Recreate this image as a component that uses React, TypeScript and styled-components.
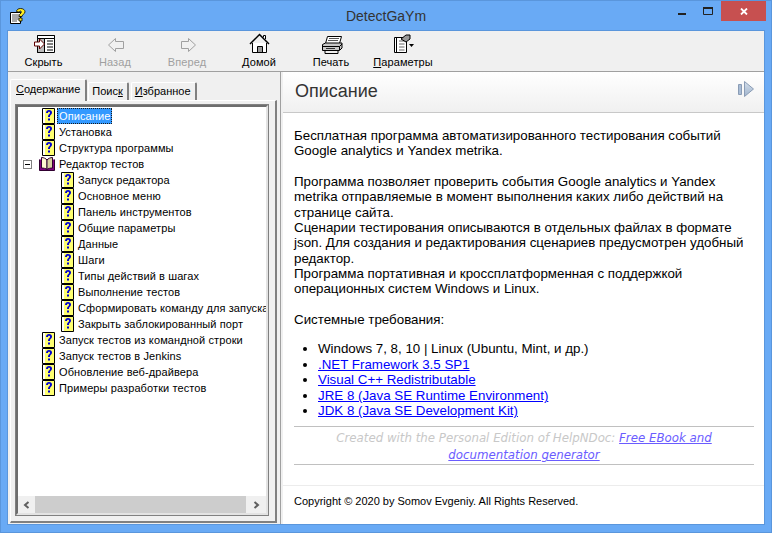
import styled, {createGlobalStyle} from "styled-components";

const GlobalStyle = createGlobalStyle`
  html, body {
    margin: 0;
    padding: 0;
    background: #69aaf5;
  }
`

const Window = styled.div`
  width: 772px;
  height: 533px;
  box-sizing: border-box;
  background: #69aaf5;
  border: 1px solid #5a96dc;
  display: flex;
  flex-direction: column;
  overflow: hidden;
  font-family: "Liberation Sans", Arial, sans-serif;
`

const TitleBar = styled.div`
  height: 29px;
  flex: none;
  display: flex;
  align-items: flex-start;
  padding: 0 5px 0 9px;
  position: relative;
`

const AppIcon = styled.svg`
  width: 16px;
  height: 16px;
  margin-top: 7px;
`

const TitleText = styled.div`
  position: absolute;
  left: 0;
  right: 0;
  top: 7px;
  text-align: center;
  font-size: 14px;
  line-height: 16px;
  color: #333;
`

const WindowButtons = styled.div`
  margin-left: auto;
  display: flex;
  align-items: flex-start;
  position: relative;
`

const WindowButton = styled.div<{ $close?: boolean }>`
  width: ${props => props.$close ? "45px" : "26px"};
  height: 20px;
  display: flex;
  align-items: center;
  justify-content: center;
  background: ${props => props.$close ? "#c75050" : "transparent"};
`

const Client = styled.div`
  flex: 1;
  min-height: 0;
  margin: 0 6px 7px 6px;
  background: #f0f0f0;
  display: flex;
  flex-direction: column;
  border: 1px solid #5a96dc;
`

const Toolbar = styled.div`
  height: 40px;
  flex: none;
  display: flex;
  align-items: flex-start;
  background: #f0f0f0;
  border-bottom: 1px solid #a0a0a0;
`

const ToolButton = styled.div<{ $width: number; $disabled?: boolean }>`
  width: ${props => props.$width}px;
  flex: none;
  display: flex;
  flex-direction: column;
  align-items: center;
  font-size: 11px;
  line-height: 13px;
  letter-spacing: 0.1px;
  color: ${props => props.$disabled ? "#a0a0a0" : "#000"};
`

const ToolIcon = styled.svg`
  width: 24px;
  height: 22px;
  margin-top: 2px;
  margin-bottom: 1px;
`

const Underlined = styled.span`
  text-decoration: underline;
`

const Panes = styled.div`
  flex: 1;
  min-height: 0;
  display: flex;
`

const LeftPane = styled.div`
  width: 273px;
  flex: none;
  box-sizing: border-box;
  padding: 7px 3px 1px 2px;
  display: flex;
  flex-direction: column;
  border-right: 1px solid #a0a0a0;
`

const Tabs = styled.div`
  height: 21px;
  flex: none;
  display: flex;
  align-items: flex-end;
  position: relative;
  z-index: 1;
`

const Tab = styled.div<{ $active?: boolean }>`
  box-sizing: border-box;
  height: ${props => props.$active ? "22px" : "18px"};
  padding: ${props => props.$active ? "2px 5px 0 5px" : "1px 4px 0 3px"};
  margin-bottom: ${props => props.$active ? "-1px" : "0"};
  margin-left: ${props => props.$active ? "0" : "1px"};
  margin-right: ${props => props.$active ? "0" : "1px"};
  font-size: 11px;
  line-height: 14px;
  white-space: nowrap;
  background: #f0f0f0;
  color: #000;
  border-top: 1px solid #fff;
  border-left: 1px solid #fff;
  border-right: 2px solid #808080;
  border-top-left-radius: 2px;
  border-top-right-radius: 2px;
`

const TabPage = styled.div`
  flex: 1;
  min-height: 0;
  box-sizing: border-box;
  border-top: 1px solid #fff;
  border-left: 1px solid #fff;
  border-right: 2px solid #808080;
  border-bottom: 2px solid #808080;
  padding: 4px 7px 6px 5px;
  display: flex;
`

const TreeBox = styled.div`
  flex: 1;
  min-width: 0;
  background: #fff;
  box-sizing: border-box;
  border: 2px solid #6d6d6d;
  border-right-color: #e3e3e3;
  border-bottom-color: #e3e3e3;
  outline: 1px solid #808080;
  outline-offset: 0;
  display: flex;
  flex-direction: column;
`

const TreeList = styled.div`
  flex: 1;
  min-height: 0;
  overflow: hidden;
  padding-top: 1px;
`

const TreeRow = styled.div<{ $level: number }>`
  height: 16px;
  display: flex;
  align-items: center;
  white-space: nowrap;
  padding-left: ${props => props.$level === 0 ? 5 : 42}px;
  font-size: 11px;
  letter-spacing: 0.1px;
  color: #000;
`

const Expander = styled.div`
  width: 9px;
  height: 9px;
  box-sizing: border-box;
  border: 1px solid #808080;
  margin-right: 9px;
  flex: none;
  display: flex;
  align-items: center;
  justify-content: center;
  &::after {
    content: "";
    width: 5px;
    height: 1px;
    background: #000;
  }
`

const ExpanderGap = styled.div`
  width: 18px;
  flex: none;
`

const NodeIcon = styled.svg`
  width: 14px;
  height: 16px;
  flex: none;
  overflow: visible;
`

const NodeLabel = styled.span<{ $selected?: boolean }>`
  margin-left: 2px;
  padding: 0 2px;
  height: 16px;
  line-height: 16px;
  box-sizing: border-box;
  color: ${props => props.$selected ? "#fff" : "#000"};
  background: ${props => props.$selected ? "#3399ff" : "transparent"};
  outline: ${props => props.$selected ? "1px dotted #1a1a1a" : "none"};
  outline-offset: -1px;
`

const ScrollBar = styled.div`
  height: 17px;
  flex: none;
  display: flex;
  align-items: stretch;
  background: #f0f0f0;
`

const ScrollArrow = styled.div<{ $width: number }>`
  width: ${props => props.$width}px;
  flex: none;
  display: flex;
  align-items: center;
  justify-content: center;
`

const ScrollThumb = styled.div`
  flex: 1;
  background: #cdcdcd;
`

const Splitter = styled.div`
  width: 2px;
  flex: none;
  background: #f0f0f0;
`

const RightPane = styled.div`
  flex: 1;
  min-width: 0;
  display: flex;
  flex-direction: column;
  background: #fff;
`

const TopicHeader = styled.div`
  height: 41px;
  flex: none;
  box-sizing: border-box;
  padding: 8px 10px 0 12px;
  display: flex;
  justify-content: space-between;
  background: linear-gradient(#ffffff, #f0f0f0);
  border-bottom: 1px solid #c8c8c8;
`

const TopicTitle = styled.h1`
  margin: 0;
  font-size: 18px;
  font-weight: normal;
  line-height: 22px;
  color: #333;
`

const NextIcon = styled.svg`
  width: 16px;
  height: 16px;
  margin-top: 1px;
`

const TopicBody = styled.div`
  flex: 1;
  min-height: 0;
  padding: 15px 10px 0 11px;
  font-size: 13.33px;
  line-height: 15.35px;
  color: #000;
`

const Paragraph = styled.p`
  margin: 0;
`

const Spacer = styled.div`
  height: 15.35px;
`

const Requirements = styled.ul`
  margin: 14px 0 0 0;
  padding: 0 0 0 24px;
  list-style: disc;
  line-height: 15.5px;
`

const HelpLink = styled.a`
  color: #0000ff;
  text-decoration: underline;
`

const Credit = styled.div`
  margin-top: 7px;
  border-top: 1px solid #c0c0c0;
  border-bottom: 1px solid #c0c0c0;
  text-align: center;
  font-style: italic;
  font-family: "DejaVu Sans", Verdana, sans-serif;
  font-size: 11.8px;
  line-height: 17px;
  padding: 3px 0 0 0;
  color: #c8c8c8;
`

const CreditLink = styled.a`
  color: #6a5cff;
  text-decoration: underline;
`

const TopicFooter = styled.div`
  height: 39px;
  flex: none;
  box-sizing: border-box;
  border-top: 1px solid #ececec;
  padding: 8px 11px 0 11px;
  font-size: 11px;
  line-height: 15px;
  color: #000;
`

function HelpPageIcon() {
    return <NodeIcon viewBox="0 0 14 16">
        <path d="M1.5 0.5H13.5V15.5H1.5Z" fill="#ffff70" stroke="#000"/>
        <path d="M2 1H4V15H2Z" fill="#fff"/>
        <path d="M5 5C5 3 6.3 2 8 2C9.9 2 11 3.1 11 4.6C11 6.8 9 6.6 9 9H7C7 6.2 9 6.2 9 4.7C9 4.1 8.6 3.7 8 3.7C7.4 3.7 7 4.2 7 5Z" fill="#0000d0"/>
        <path d="M7 10.5H9V12.5H7Z" fill="#0000d0"/>
    </NodeIcon>
}

function BookIcon() {
    return <NodeIcon viewBox="0 0 14 16">
        <path d="M-1.5 3.5V14.5H13.5V3.5" fill="#800080" stroke="#300030"/>
        <path d="M0.5 1.5C2.5 1.5 5 2.5 6 4V13.5C5 12.5 2.5 12 0.5 12Z" fill="#fff7d0" stroke="#300030"/>
        <path d="M11.5 1.5C9.5 1.5 7 2.5 6 4V13.5C7 12.5 9.5 12 11.5 12Z" fill="#d8d0a0" stroke="#300030"/>
    </NodeIcon>
}

const TREE: { label: string, level: number, icon?: "book", selected?: boolean, expander?: boolean }[] = [
    {label: "Описание", level: 0, selected: true},
    {label: "Установка", level: 0},
    {label: "Структура программы", level: 0},
    {label: "Редактор тестов", level: 0, icon: "book", expander: true},
    {label: "Запуск редактора", level: 1},
    {label: "Основное меню", level: 1},
    {label: "Панель инструментов", level: 1},
    {label: "Общие параметры", level: 1},
    {label: "Данные", level: 1},
    {label: "Шаги", level: 1},
    {label: "Типы действий в шагах", level: 1},
    {label: "Выполнение тестов", level: 1},
    {label: "Сформировать команду для запуска", level: 1},
    {label: "Закрыть заблокированный порт", level: 1},
    {label: "Запуск тестов из командной строки", level: 0},
    {label: "Запуск тестов в Jenkins", level: 0},
    {label: "Обновление веб-драйвера", level: 0},
    {label: "Примеры разработки тестов", level: 0},
];

export default function App() {
    return <Window>
        <GlobalStyle/>
        <TitleBar>
            <AppIcon viewBox="0 0 16 16">
                <path d="M0.5 4.5H10.5V15.5H0.5Z" fill="#fff" stroke="#000"/>
                <path d="M2 7H9M2 9H9M2 11H9M2 13H7" stroke="#555"/>
                <path d="M6.5 3.5C6.5 1.5 8.5 0.5 10.5 0.5C13 0.5 15 1.8 15 3.8C15 6.2 12 6.2 12 8.5H9C9 5.5 11.3 5.7 11.3 4C11.3 3.4 11 3 10.4 3C9.8 3 9.5 3.4 9.5 4.2Z" fill="#ffee22" stroke="#000" strokeWidth="0.8"/>
                <path d="M9 10H12V13H9Z" fill="#ffee22" stroke="#000" strokeWidth="0.8"/>
            </AppIcon>
            <TitleText>DetectGaYm</TitleText>
            <WindowButtons>
                <WindowButton>
                    <svg width="8" height="8"><rect y="6" width="8" height="2" fill="#222"/></svg>
                </WindowButton>
                <WindowButton>
                    <svg width="10" height="8"><path d="M0.5 1.5H9.5V7.5H0.5Z" fill="none" stroke="#222"/><rect width="10" height="2" fill="#222"/></svg>
                </WindowButton>
                <WindowButton $close>
                    <svg width="8" height="7"><path d="M1 0.5L7 6.5M7 0.5L1 6.5" stroke="#fff" strokeWidth="1.8"/></svg>
                </WindowButton>
            </WindowButtons>
        </TitleBar>
        <Client>
            <Toolbar>
                <ToolButton $width={71}>
                    <ToolIcon viewBox="0 0 24 22">
                        <path d="M5.5 2.5H22.5V19.5H5.5Z" fill="#fff" stroke="#000"/>
                        <path d="M5.5 2.5H22.5V5.5H5.5Z" fill="#fff" stroke="#000"/>
                        <path d="M5.5 5.5H12.5V19.5H5.5Z" fill="#bbb" stroke="#000"/>
                        <path d="M15 8H21M15 11H21M15 14H21M15 17H21" stroke="#000"/>
                        <path d="M2.5 9H7.5V6L12.5 11L7.5 16V13H2.5Z" fill="#fff" stroke="#600000"/>
                    </ToolIcon>
                    Скрыть
                </ToolButton>
                <ToolButton $width={72} $disabled>
                    <ToolIcon viewBox="0 0 24 22">
                        <path d="M12.5 5.5L5.5 12L12.5 18.5V15.5H20.5V8.5H12.5Z" fill="none" stroke="#a0a0a0"/>
                    </ToolIcon>
                    Назад
                </ToolButton>
                <ToolButton $width={72} $disabled>
                    <ToolIcon viewBox="0 0 24 22">
                        <path d="M13.5 5.5L20.5 12L13.5 18.5V15.5H6.5V8.5H13.5Z" fill="none" stroke="#a0a0a0"/>
                    </ToolIcon>
                    Вперед
                </ToolButton>
                <ToolButton $width={72}>
                    <ToolIcon viewBox="0 0 24 22">
                        <path d="M3 11L12.5 1.5L22 11" fill="none" stroke="#000" strokeWidth="1.5"/>
                        <path d="M5.5 10V19.5H19.5V10" fill="#fff" stroke="#000"/>
                        <path d="M10.5 19V13.5H15.5V19" fill="#999" stroke="#000"/>
                        <path d="M16.5 4.5V2.5H18.5V6" fill="#fff" stroke="#000"/>
                    </ToolIcon>
                    Домой
                </ToolButton>
                <ToolButton $width={72}>
                    <ToolIcon viewBox="0 0 24 22">
                        <path d="M8.5 3.5H22.5L20.5 10.5H6.5Z" fill="#fff" stroke="#000"/>
                        <path d="M10 5.5H20M9 7.5H19" stroke="#555"/>
                        <path d="M3.5 11.5L6.5 10H23V15L20.5 17.5H3.5Z" fill="#c8c8c8" stroke="#000"/>
                        <path d="M3.5 13.5H20.5V17M20.5 13.5L23 11" fill="none" stroke="#000"/>
                        <path d="M7 15.5H16" stroke="#333"/>
                        <path d="M6 17.5H19V20.5H6Z" fill="#eee" stroke="#000"/>
                    </ToolIcon>
                    Печать
                </ToolButton>
                <ToolButton $width={72}>
                    <ToolIcon viewBox="0 0 24 22">
                        <path d="M3.5 4.5H15.5V19.5H3.5Z" fill="#fff" stroke="#000"/>
                        <path d="M5.5 4.5V19" stroke="#000"/>
                        <path d="M8 8H13.5M8 11H13.5M8 14H13.5M8 17H13.5" stroke="#666"/>
                        <path d="M10 6L15 2H19V6L15 9Z" fill="#999" stroke="#000"/>
                        <path d="M18 11H23L20.5 14Z" fill="#000"/>
                    </ToolIcon>
                    <span><Underlined>П</Underlined>араметры</span>
                </ToolButton>
            </Toolbar>
            <Panes>
                <LeftPane>
                    <Tabs>
                        <Tab $active><Underlined>С</Underlined>одержание</Tab>
                        <Tab>Поис<Underlined>к</Underlined></Tab>
                        <Tab><Underlined>И</Underlined>збранное</Tab>
                    </Tabs>
                    <TabPage>
                        <TreeBox>
                            <TreeList>
                                {TREE.map(node => {
                                    return <TreeRow $level={node.level} key={node.label}>
                                        {node.expander ? <Expander/> : node.level === 0 && <ExpanderGap/>}
                                        {node.icon === "book" ? <BookIcon/> : <HelpPageIcon/>}
                                        <NodeLabel $selected={node.selected}>{node.label}</NodeLabel>
                                    </TreeRow>;
                                })}
                            </TreeList>
                            <ScrollBar>
                                <ScrollArrow $width={17}>
                                    <svg width="7" height="8"><path d="M5.5 1L2 4L5.5 7" fill="none" stroke="#606060" strokeWidth="2"/></svg>
                                </ScrollArrow>
                                <ScrollThumb/>
                                <ScrollArrow $width={20}>
                                    <svg width="7" height="8"><path d="M1.5 1L5 4L1.5 7" fill="none" stroke="#606060" strokeWidth="2"/></svg>
                                </ScrollArrow>
                            </ScrollBar>
                        </TreeBox>
                    </TabPage>
                </LeftPane>
                <Splitter/>
                <RightPane>
                    <TopicHeader>
                        <TopicTitle>Описание</TopicTitle>
                        <NextIcon viewBox="0 0 16 16">
                            <defs>
                                <linearGradient id="nextFill" x1="0" y1="0" x2="0" y2="1">
                                    <stop offset="0" stopColor="#d5e0ec"/>
                                    <stop offset="1" stopColor="#9fb3cc"/>
                                </linearGradient>
                            </defs>
                            <path d="M0.5 3.5H3.5V13.5H0.5Z" fill="#a9bdd6" stroke="#8a9cb5"/>
                            <path d="M6.5 0.5L15.5 8L6.5 15.5Z" fill="url(#nextFill)" stroke="#8a9cb5"/>
                        </NextIcon>
                    </TopicHeader>
                    <TopicBody>
                        <Paragraph>Бесплатная программа автоматизированного тестирования событий Google analytics и Yandex metrika.</Paragraph>
                        <Spacer/>
                        <Paragraph>Программа позволяет проверить события Google analytics и Yandex metrika отправляемые в момент выполнения каких либо действий на странице сайта.</Paragraph>
                        <Paragraph>Сценарии тестирования описываются в отдельных файлах в формате json. Для создания и редактирования сценариев предусмотрен удобный редактор.</Paragraph>
                        <Paragraph>Программа портативная и кроссплатформенная с поддержкой операционных систем Windows и Linux.</Paragraph>
                        <Spacer/>
                        <Paragraph>Системные требования:</Paragraph>
                        <Requirements>
                            <li>Windows 7, 8, 10 | Linux (Ubuntu, Mint, и др.)</li>
                            <li><HelpLink>.NET Framework 3.5 SP1</HelpLink></li>
                            <li><HelpLink>Visual C++ Redistributable</HelpLink></li>
                            <li><HelpLink>JRE 8 (Java SE Runtime Environment)</HelpLink></li>
                            <li><HelpLink>JDK 8 (Java SE Development Kit)</HelpLink></li>
                        </Requirements>
                        <Credit>Created with the Personal Edition of HelpNDoc: <CreditLink>Free EBook and documentation generator</CreditLink></Credit>
                    </TopicBody>
                    <TopicFooter>Copyright © 2020 by Somov Evgeniy. All Rights Reserved.</TopicFooter>
                </RightPane>
            </Panes>
        </Client>
    </Window>
}
